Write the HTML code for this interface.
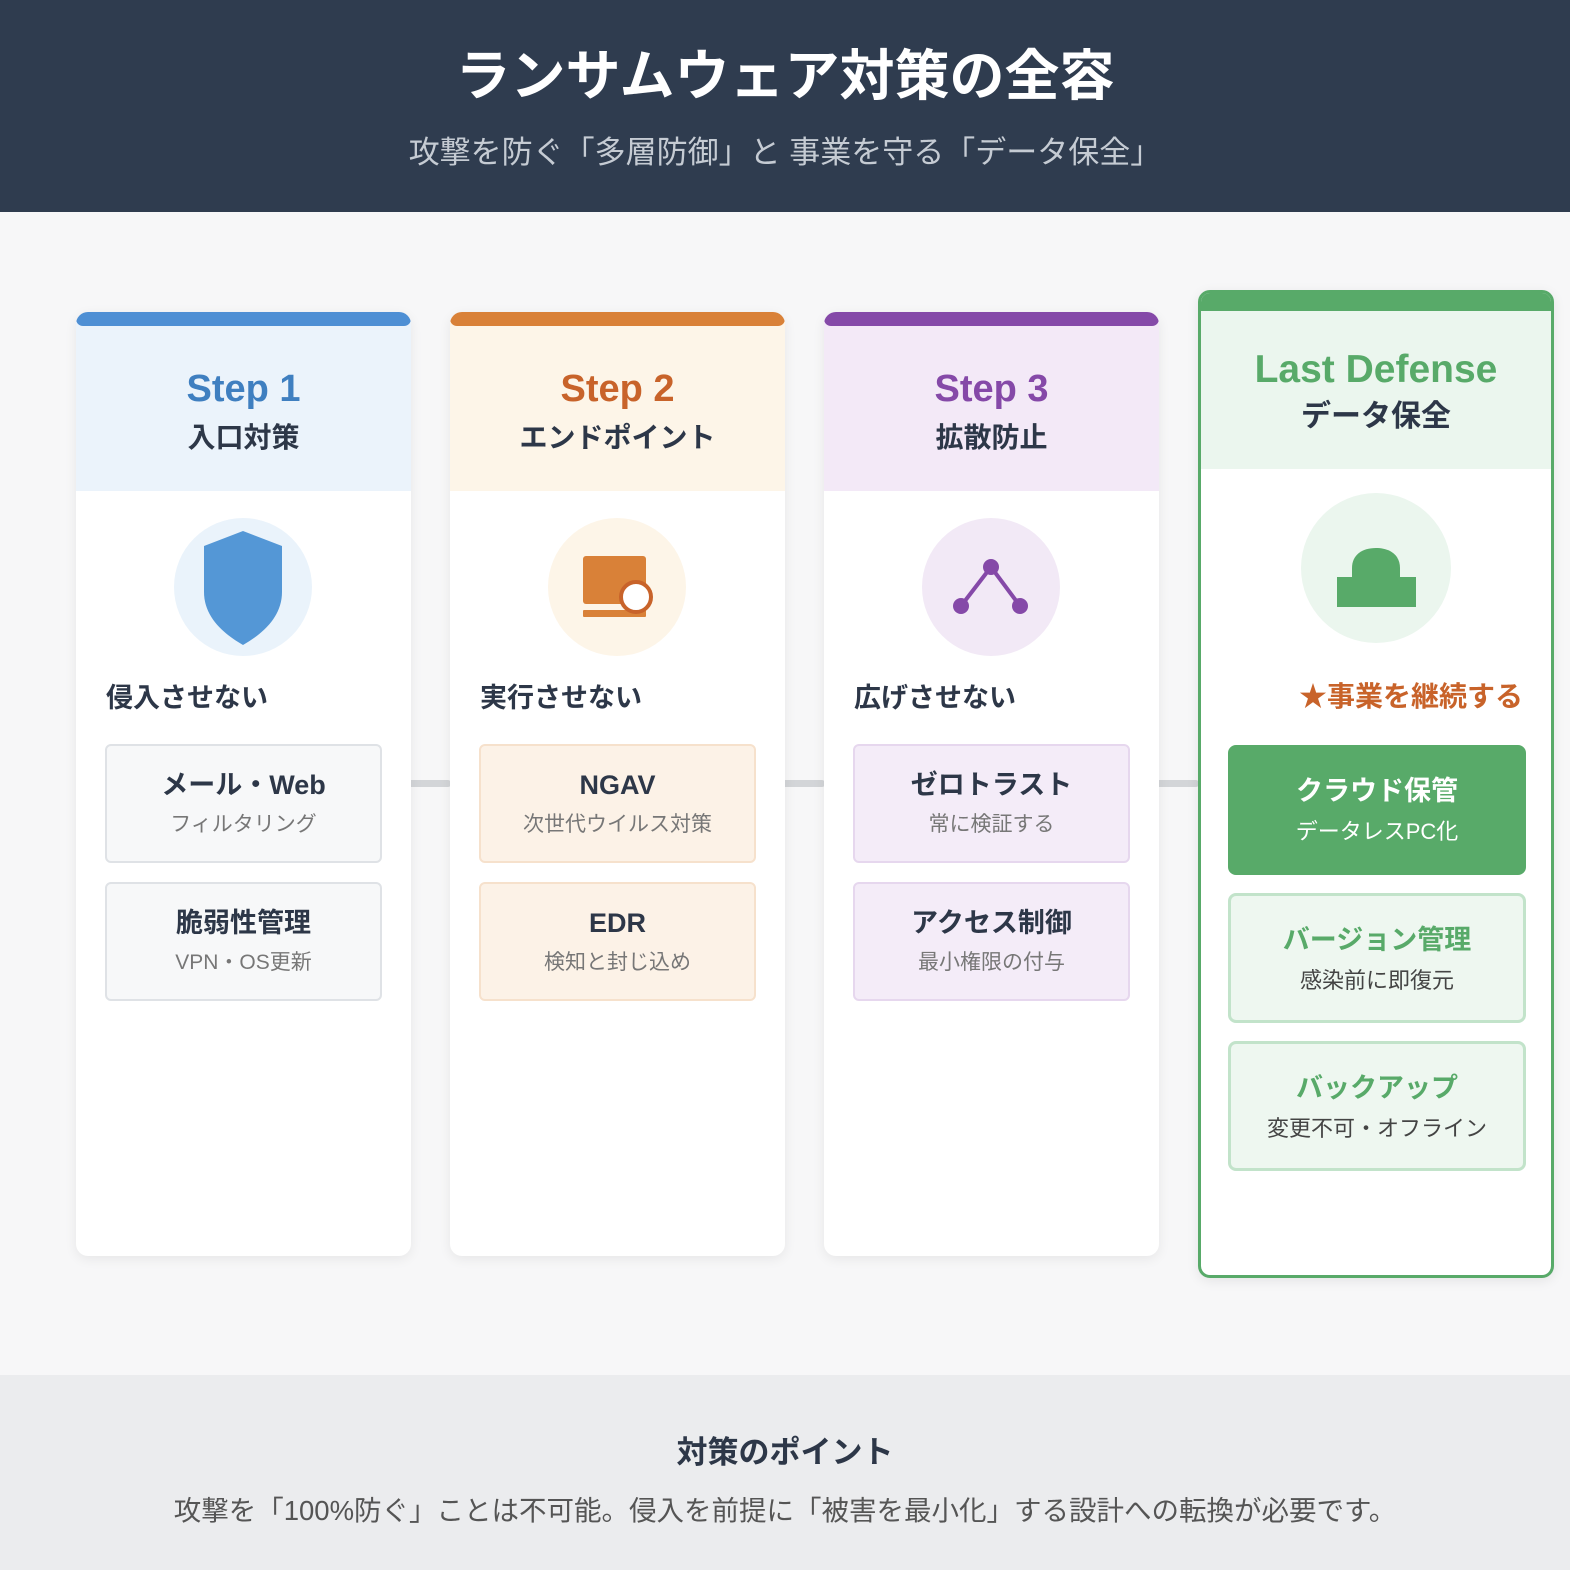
<!DOCTYPE html>
<html><head><meta charset="utf-8"><style>
*{margin:0;padding:0;box-sizing:border-box}
body{width:1570px;height:1570px;background:#f7f7f8;font-family:"Liberation Sans","Noto Sans CJK JP",sans-serif;position:relative;overflow:hidden;color:#2d3748}
.hdr{position:absolute;left:0;top:0;width:1570px;height:212px;background:#2f3c4f;text-align:center}
.hdr h1{position:absolute;top:42px;width:100%;font-size:55px;color:#fff;font-weight:bold;line-height:68px}
.hdr p{position:absolute;top:133px;width:100%;font-size:31px;color:#c5cbd3;line-height:40px}
.a{position:absolute}
.card{position:absolute;top:312px;width:335px;height:944px;background:#fff;border-radius:12px;box-shadow:0 3px 12px rgba(0,0,0,.07);overflow:hidden}
.bar{height:14px;border-radius:7px;position:relative;z-index:2}
.ch{height:172px;text-align:center;margin-top:-7px;padding-top:7px}
.ch .s{font-size:38px;font-weight:bold;padding-top:40px;line-height:46px}
.ch .t{font-size:28px;font-weight:bold;color:#2d3748;line-height:44px;margin-top:4px}
.circ{position:absolute;left:98px;top:206px;width:138px;height:138px;border-radius:50%}
.lbl{position:absolute;left:30px;top:364px;font-size:27px;font-weight:bold;color:#2d3748}
.box{position:absolute;left:29px;width:277px;height:119px;border:2px solid;border-radius:6px;text-align:center}
.box b{display:block;font-size:27px;margin-top:22px;line-height:34px}
.box span{display:block;font-size:21px;color:#777;margin-top:6px}
.conn{position:absolute;top:780px;height:7px;width:44px;background:#d3d5d8;border-radius:3px}
</style></head><body>
<div class="hdr"><h1>ランサムウェア対策の全容</h1><p>攻撃を防ぐ「多層防御」と 事業を守る「データ保全」</p></div>

<div class="conn" style="left:407px"></div>
<div class="conn" style="left:781px"></div>
<div class="conn" style="left:1155px"></div>

<div class="card" style="left:76px">
<div class="bar" style="background:#4e8fd4"></div>
<div class="ch" style="background:#ebf3fb"><div class="s" style="color:#3f7fc0">Step 1</div><div class="t">入口対策</div></div>
<div class="circ" style="background:#eaf3fb"><svg width="138" height="138"><path d="M30 28 L69 13 L108 28 L108 74 C108 98 90 115 69 127 C48 115 30 98 30 74 Z" fill="#5497d6"/></svg></div>
<div class="lbl">侵入させない</div>
<div class="box" style="top:432px;background:#f7f8f9;border-color:#dfe2e6"><b>メール・Web</b><span>フィルタリング</span></div>
<div class="box" style="top:570px;background:#f7f8f9;border-color:#dfe2e6"><b>脆弱性管理</b><span>VPN・OS更新</span></div>
</div>

<div class="card" style="left:450px">
<div class="bar" style="background:#d98138"></div>
<div class="ch" style="background:#fdf5e8"><div class="s" style="color:#c8632a">Step 2</div><div class="t">エンドポイント</div></div>
<div class="circ" style="background:#fdf5e8"><svg width="138" height="138"><rect x="35" y="38" width="63" height="48" rx="3" fill="#d98138"/><rect x="35" y="92" width="63" height="7" rx="1" fill="#d98138"/><circle cx="88" cy="79" r="15" fill="#fff" stroke="#c8632a" stroke-width="4"/></svg></div>
<div class="lbl">実行させない</div>
<div class="box" style="top:432px;background:#fcf2e7;border-color:#f6e1cc"><b>NGAV</b><span>次世代ウイルス対策</span></div>
<div class="box" style="top:570px;background:#fcf2e7;border-color:#f6e1cc"><b>EDR</b><span>検知と封じ込め</span></div>
</div>

<div class="card" style="left:824px">
<div class="bar" style="background:#8549a8"></div>
<div class="ch" style="background:#f3e9f7"><div class="s" style="color:#8549a8">Step 3</div><div class="t">拡散防止</div></div>
<div class="circ" style="background:#f2e9f6"><svg width="138" height="138"><path d="M39 88 L69 49 L98 88" stroke="#8549a8" stroke-width="4" fill="none"/><circle cx="69" cy="49" r="8" fill="#8549a8"/><circle cx="39" cy="88" r="8" fill="#8549a8"/><circle cx="98" cy="88" r="8" fill="#8549a8"/></svg></div>
<div class="lbl">広げさせない</div>
<div class="box" style="top:432px;background:#f4ecf8;border-color:#e6d7ee"><b>ゼロトラスト</b><span>常に検証する</span></div>
<div class="box" style="top:570px;background:#f4ecf8;border-color:#e6d7ee"><b>アクセス制御</b><span>最小権限の付与</span></div>
</div>

<div class="a" style="left:1198px;top:290px;width:356px;height:988px;border:3px solid #58aa69;border-radius:12px;background:#fff;overflow:hidden;box-shadow:0 3px 12px rgba(0,0,0,.08)">
<div style="height:18px;background:#58aa69"></div>
<div style="height:158px;background:#ebf6ee;text-align:center"><div style="font-size:39px;font-weight:bold;color:#58aa69;padding-top:36px;line-height:46px">Last Defense</div><div style="font-size:30px;font-weight:bold;line-height:48px">データ保全</div></div>
<div class="a" style="left:100px;top:200px;width:150px;height:150px;border-radius:50%;background:#ebf6ee"><svg width="150" height="150"><path d="M51 84 L51 75 C51 62 61 55 75 55 C89 55 99 62 99 75 L99 84 Z" fill="#58aa69"/><rect x="36" y="84" width="79" height="30" fill="#58aa69"/></svg></div>
<div class="a" style="right:28px;top:382px;font-size:28px;font-weight:bold;color:#c8632a">★事業を継続する</div>
<div class="a" style="left:27px;top:452px;width:298px;height:130px;background:#58aa69;border-radius:8px;text-align:center;color:#fff"><div style="font-size:27px;font-weight:bold;margin-top:28px;line-height:36px">クラウド保管</div><div style="font-size:22px;margin-top:5px">データレスPC化</div></div>
<div class="a" style="left:27px;top:600px;width:298px;height:130px;background:#eef7f0;border:3px solid #c2e3ca;border-radius:8px;text-align:center"><div style="font-size:27px;font-weight:bold;margin-top:26px;line-height:36px;color:#58aa69">バージョン管理</div><div style="font-size:22px;margin-top:5px;color:#444">感染前に即復元</div></div>
<div class="a" style="left:27px;top:748px;width:298px;height:130px;background:#eef7f0;border:3px solid #c2e3ca;border-radius:8px;text-align:center"><div style="font-size:27px;font-weight:bold;margin-top:26px;line-height:36px;color:#58aa69">バックアップ</div><div style="font-size:22px;margin-top:5px;color:#444">変更不可・オフライン</div></div>
</div>

<div class="a" style="left:0;top:1375px;width:1570px;height:195px;background:#ebecee;text-align:center">
<div style="font-size:31px;font-weight:bold;margin-top:58px;line-height:40px">対策のポイント</div>
<div style="font-size:27.5px;color:#555;margin-top:20px;line-height:36px">攻撃を「100%防ぐ」ことは不可能。侵入を前提に「被害を最小化」する設計への転換が必要です。</div>
</div>
</body></html>
